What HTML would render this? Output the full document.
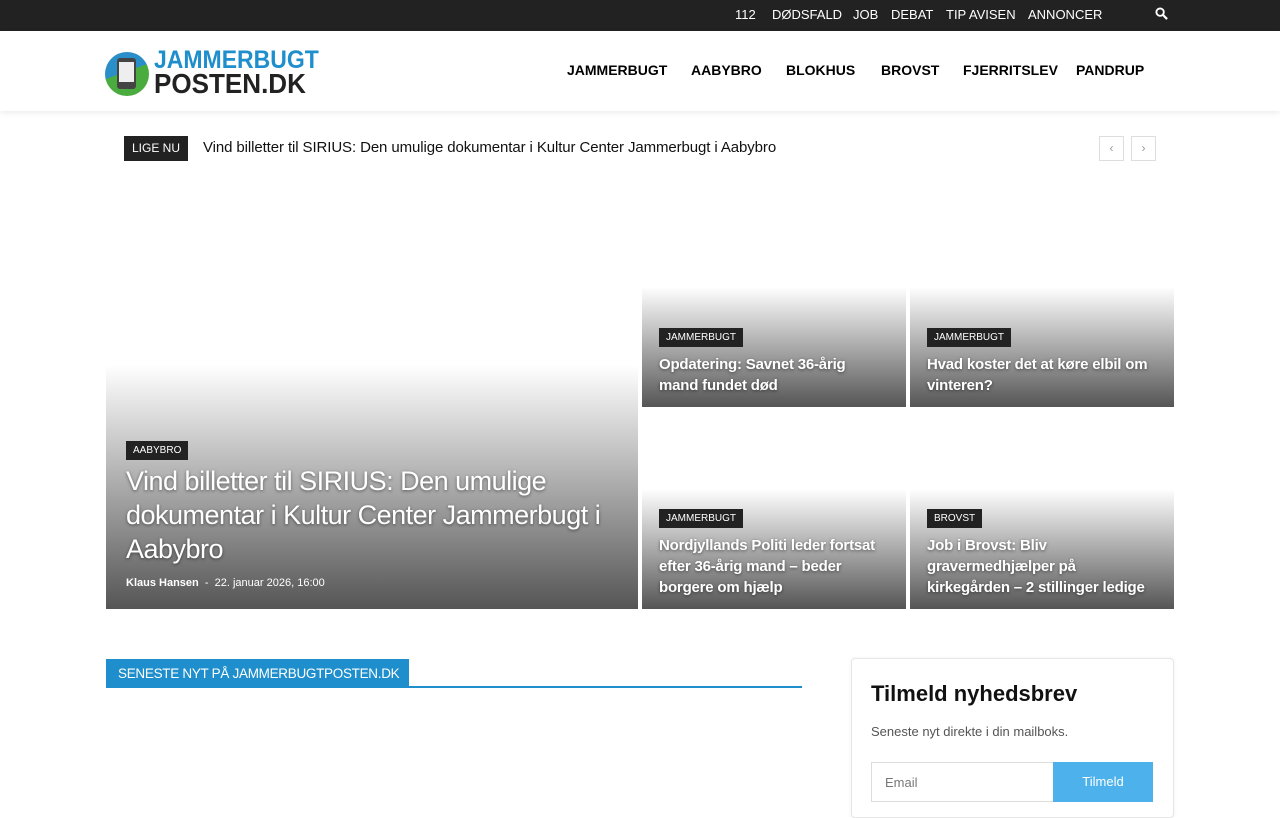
<!DOCTYPE html>
<html><head><meta charset="utf-8"><style>
*{box-sizing:border-box;margin:0;padding:0}
body{width:1280px;height:800px;overflow:hidden;background:#fff;font-family:"Liberation Sans",sans-serif;position:relative}
.top{position:absolute;left:0;top:0;width:1280px;height:31px;background:#222}
.top span{position:absolute;top:7px;color:#fff;font-size:13px;white-space:nowrap}
.hdr{position:absolute;top:31px;left:0;width:1280px;height:80px;background:#fff;box-shadow:0 2px 6px rgba(0,0,0,.08)}
.nav{position:absolute;top:62px;font-weight:bold;font-size:14px;color:#000;white-space:nowrap}
.tile{position:absolute;overflow:hidden}
.cat{position:absolute;background:#222;color:#fff;font-size:10px;padding:3px 7px;line-height:13px}
.tt{position:absolute;color:#fff;font-weight:bold;text-shadow:0 1px 3px rgba(0,0,0,.5)}
.sm{font-size:15px;line-height:21px;letter-spacing:-.2px;width:250px}
</style></head><body>
<div class="top">
<span style="left:735px">112</span><span style="left:772px">DØDSFALD</span><span style="left:853px">JOB</span><span style="left:891px">DEBAT</span><span style="left:946px">TIP AVISEN</span><span style="left:1028px">ANNONCER</span>
<svg style="position:absolute;left:1155px;top:7px" width="13" height="13" viewBox="0 0 14 14"><circle cx="5.5" cy="5.5" r="4" stroke="#fff" stroke-width="2" fill="none"/><path d="M8.5 8.5L13 13" stroke="#fff" stroke-width="2.4"/></svg>
</div>
<div class="hdr"></div>
<div style="position:absolute;left:105px;top:52px;width:44px;height:44px;border-radius:50%;background:linear-gradient(160deg,#2a8fc9 45%,#4aab3e 46%)"></div>
<div style="position:absolute;left:117px;top:58px;width:19px;height:31px;background:#444;border-radius:3px"><div style="margin:4px 2px;height:20px;background:#eee"></div></div>
<div style="position:absolute;left:154px;top:47px;font-weight:bold;font-size:25px;color:#1e8fcc;line-height:26px;transform:scaleX(.92);transform-origin:left">JAMMERBUGT</div>
<div style="position:absolute;left:154px;top:71px;font-weight:bold;font-size:28px;color:#222;line-height:26px;transform:scaleX(.93);transform-origin:left">POSTEN.DK</div>
<div class="nav" style="left:567px">JAMMERBUGT</div><div class="nav" style="left:691px">AABYBRO</div><div class="nav" style="left:786px">BLOKHUS</div><div class="nav" style="left:881px">BROVST</div><div class="nav" style="left:963px">FJERRITSLEV</div><div class="nav" style="left:1076px">PANDRUP</div>
<div style="position:absolute;left:124px;top:136px;width:64px;height:25px;background:#222;color:#fff;font-size:12px;line-height:25px;text-align:center">LIGE NU</div>
<div style="position:absolute;left:203px;top:139px;font-size:15px;color:#111;letter-spacing:-.1px">Vind billetter til SIRIUS: Den umulige dokumentar i Kultur Center Jammerbugt i Aabybro</div>
<div style="position:absolute;left:1099px;top:136px;width:25px;height:25px;border:1px solid #ddd;color:#999;text-align:center;line-height:22px;font-size:12px">‹</div>
<div style="position:absolute;left:1131px;top:136px;width:25px;height:25px;border:1px solid #ddd;color:#999;text-align:center;line-height:22px;font-size:12px">›</div>

<div class="tile" style="left:106px;top:187px;width:532px;height:422px;background:linear-gradient(#fff 0,#fff 178px,#555 422px)"></div>
<div class="cat" style="left:126px;top:441px">AABYBRO</div>
<div class="tt" style="left:126px;top:464px;width:500px;font-size:27px;line-height:34px;font-weight:normal;letter-spacing:-.5px">Vind billetter til SIRIUS: Den umulige dokumentar i Kultur Center Jammerbugt i Aabybro</div>
<div style="position:absolute;left:126px;top:577px;font-size:11px;color:#fff"><b>Klaus Hansen</b> &nbsp;- &nbsp;22. januar 2026, 16:00</div>

<div class="tile" style="left:642px;top:187px;width:264px;height:220px;background:linear-gradient(#fff 0,#fff 100px,#555 220px)"></div>
<div class="tile" style="left:910px;top:187px;width:264px;height:220px;background:linear-gradient(#fff 0,#fff 100px,#555 220px)"></div>
<div class="tile" style="left:642px;top:411px;width:264px;height:198px;background:linear-gradient(#fff 0,#fff 78px,#555 198px)"></div>
<div class="tile" style="left:910px;top:411px;width:264px;height:198px;background:linear-gradient(#fff 0,#fff 78px,#555 198px)"></div>
<div class="cat" style="left:659px;top:328px">JAMMERBUGT</div>
<div class="tt sm" style="left:659px;top:354px;width:205px">Opdatering: Savnet 36-årig mand fundet død</div>
<div class="cat" style="left:927px;top:328px">JAMMERBUGT</div>
<div class="tt sm" style="left:927px;top:354px;width:240px">Hvad koster det at køre elbil om vinteren?</div>
<div class="cat" style="left:659px;top:509px">JAMMERBUGT</div>
<div class="tt sm" style="left:659px;top:535px;width:240px">Nordjyllands Politi leder fortsat efter 36-årig mand – beder borgere om hjælp</div>
<div class="cat" style="left:927px;top:509px">BROVST</div>
<div class="tt sm" style="left:927px;top:535px;width:235px">Job i Brovst: Bliv gravermedhjælper på kirkegården – 2 stillinger ledige</div>

<div style="position:absolute;left:106px;top:686px;width:696px;height:2px;background:#1e8fcc"></div>
<div style="position:absolute;left:106px;top:659px;width:303px;height:28px;background:#1e8fcc;color:#fff;font-size:13.5px;line-height:30px;padding-left:12px;white-space:nowrap;letter-spacing:-.3px">SENESTE NYT PÅ JAMMERBUGTPOSTEN.DK</div>

<div style="position:absolute;left:851px;top:658px;width:323px;height:160px;border:1px solid #e6e6e6;border-radius:4px;box-shadow:0 0 4px rgba(0,0,0,.06)"></div>
<div style="position:absolute;left:871px;top:681px;font-size:22px;font-weight:bold;color:#111">Tilmeld nyhedsbrev</div>
<div style="position:absolute;left:871px;top:724px;font-size:13px;color:#555">Seneste nyt direkte i din mailboks.</div>
<div style="position:absolute;left:871px;top:762px;width:183px;height:40px;border:1px solid #ddd;font-size:13px;color:#777;padding:12px 13px">Email</div>
<div style="position:absolute;left:1053px;top:762px;width:100px;height:40px;background:#4db2ec;color:#fff;font-size:13px;text-align:center;line-height:40px">Tilmeld</div>
</body></html>
